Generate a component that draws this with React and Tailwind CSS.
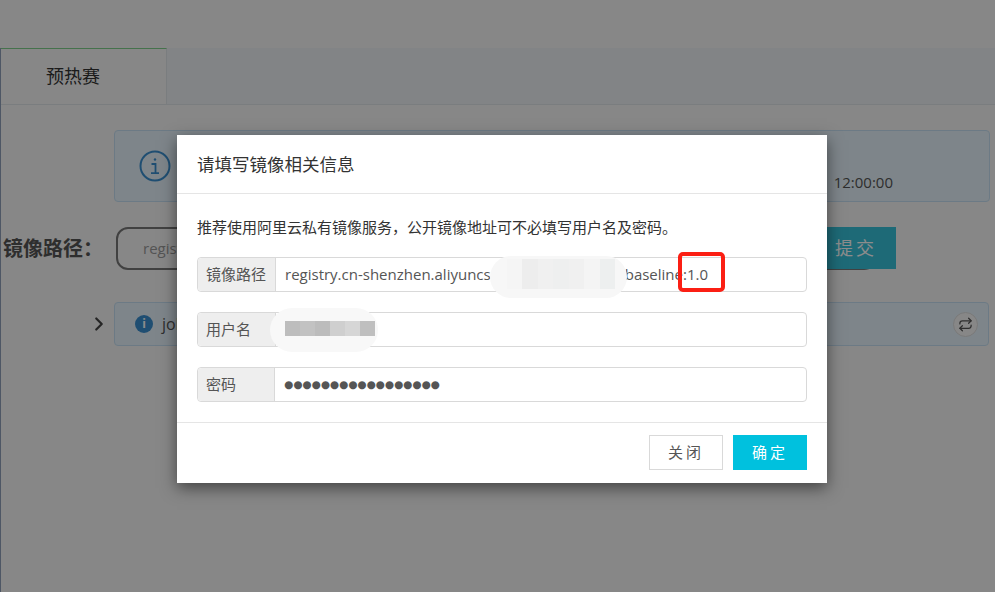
import React from 'react';
import { ChevronRight, Repeat } from 'lucide-react';

const cjk = "font-['Open_Sans','Noto_Sans_CJK_SC',sans-serif]";

function InfoIcon() {
  return (
    <svg width="32" height="32" viewBox="0 0 32 32" fill="none" stroke="#3a8fd0" strokeWidth="2">
      <circle cx="16" cy="16" r="14.5" />
      <circle cx="16" cy="9.5" r="1.2" fill="#3a8fd0" stroke="none" />
      <path d="M12.5 14h4v9M12 23.2h8" strokeWidth="1.8" />
    </svg>
  );
}

function Field({ label, labelWidth, children }) {
  return (
    <div className="flex h-[35px] rounded-[4px] border border-[#d9d9d9] bg-white">
      <div className={`${labelWidth} flex shrink-0 items-center rounded-l-[4px] border-r border-[#d9d9d9] bg-[#eeeeee] pl-2 text-[15px] text-[#555555]`}>
        {label}
      </div>
      <div className="flex flex-1 items-center pl-[9px] text-[15px] text-[#555555]">{children}</div>
    </div>
  );
}

function Mosaic({ className, cells }) {
  return (
    <div className={`absolute flex ${className}`}>
      {cells.map((color, i) => (
        <div key={i} className="h-full flex-1" style={{ backgroundColor: color }} />
      ))}
    </div>
  );
}

export default function App() {
  return (
    <div className={`relative h-[592px] w-[995px] overflow-hidden bg-[#f6f6f6] ${cjk}`}>
      {/* page behind the dialog */}
      <div className="h-full border-l border-[#8f9eb9]">
        <div className="mt-12 flex h-[57px] border-b border-[#dfe3e8] bg-[#edf0f5]">
          <div className="flex h-full w-[166px] items-center border-r border-t border-r-[#dfe3e8] border-t-[#7fd08a] bg-[#f6f6f6] pl-[45px] text-[18px] text-[#333333]">
            预热赛
          </div>
        </div>
        <div className="ml-[113px] mr-[5px] mt-[25px] flex h-[72px] items-center rounded-[4px] border border-[#c5dff2] bg-[#e6f3fb] pl-6 pr-[96px]">
          <InfoIcon />
          <div className="ml-auto mt-[32px] text-[15px] text-[#555555]">12:00:00</div>
        </div>
        <div className="mt-[25px] flex h-[43px] items-center pl-[2px]">
          <div className="w-[113px] text-[20px] font-bold text-[#555555]">镜像路径：</div>
          <div className="flex h-full w-[760px] items-center rounded-[12px] border-2 border-[#777777] pl-[25px] text-[15px] text-[#999999]">
            registry
          </div>
        </div>
        <div className="-mt-[43px] flex h-[42px] justify-end pr-[99px]">
          <div className="flex w-[72px] items-center bg-[#37c1d9] pl-[11px] text-[18px] tracking-[3px] text-white">提交</div>
        </div>
        <div className="mt-[33px] flex items-center">
          <ChevronRight size={22} strokeWidth={2.4} className="ml-[87px] text-[#444444]" />
          <div className="ml-[4px] flex h-[44px] w-[875px] items-center rounded-[4px] border border-[#c5dff2] bg-[#e6f3fb] pl-[20px] pr-[10px] text-[16px] text-[#555555]">
            <div className="flex h-[18px] w-[18px] items-center justify-center rounded-full bg-[#3a8fd0] text-[12px] font-bold text-white">i</div>
            <span className="ml-[9px]">job</span>
            <div className="ml-auto flex h-[25px] w-[25px] items-center justify-center rounded-full border border-[#dddddd] bg-[#f6f6f6]">
              <Repeat size={15} className="text-[#555555]" />
            </div>
          </div>
        </div>
      </div>

      {/* backdrop */}
      <div className="absolute inset-0 bg-black/45" />

      {/* dialog */}
      <div className="absolute left-[177px] top-[135px] w-[650px] bg-white shadow-[0_5px_15px_rgba(0,0,0,0.5)]">
        <div className="flex h-[59px] items-center border-b border-[#e5e5e5] pl-5 text-[17.5px] text-[#333333]">
          请填写镜像相关信息
        </div>
        <div className="h-[229px] border-b border-[#e5e5e5] px-5 pt-[21px]">
          <p className="text-[15px] leading-[24px] text-[#333333]">推荐使用阿里云私有镜像服务，公开镜像地址可不必填写用户名及密码。</p>
          <div className="mt-[18px] flex flex-col gap-5">
            <Field label="镜像路径" labelWidth="w-[78px]">
              <span>registry.cn-shenzhen.aliyuncs</span>
              <span className="ml-[134px]">baseline:1.0</span>
            </Field>
            <Field label="用户名" labelWidth="w-[78px]" />
            <Field label="密码" labelWidth="w-[77px]">
              <span className="font-['DejaVu_Sans'] text-[10.5px]">●●●●●●●●●●●●●●●●●</span>
            </Field>
          </div>
        </div>
        <div className="flex h-[60px] items-start justify-end gap-[10px] pr-5 pt-3">
          <button className="h-[35px] w-[74px] border border-[#d9d9d9] bg-white text-[15px] tracking-[3px] text-[#555555]">关闭</button>
          <button className="h-[35px] w-[74px] bg-[#00c1de] text-[15px] tracking-[3px] text-white">确定</button>
        </div>
      </div>

      {/* redaction smudges and the red annotation on top of the screenshot */}
      <div className="absolute left-[490px] top-[256px] h-[42px] w-[137px] rounded-[21px] bg-[#f7f7f7]" />
      <Mosaic className="left-[507px] top-[259px] h-[30px] w-[108px] opacity-60" cells={['#f4f4f4', '#e8e8e8', '#ececec', '#e9eaea', '#ececec', '#f3f3f3', '#e8eaea']} />
      <div className="absolute left-[270px] top-[308px] h-[44px] w-[108px] rounded-[22px] bg-[#f8f8f8]" />
      <Mosaic className="left-[285px] top-[321px] h-[15px] w-[90px]" cells={['#bdbdbd', '#c2c2c2', '#bcbcbc', '#cfcfcf', '#d6d6d6', '#bfbfbf']} />
      <div className="absolute left-[678px] top-[252px] h-[40px] w-[47px] rounded-[5px] border-[4px] border-[#fb1f14]" />
    </div>
  );
}
